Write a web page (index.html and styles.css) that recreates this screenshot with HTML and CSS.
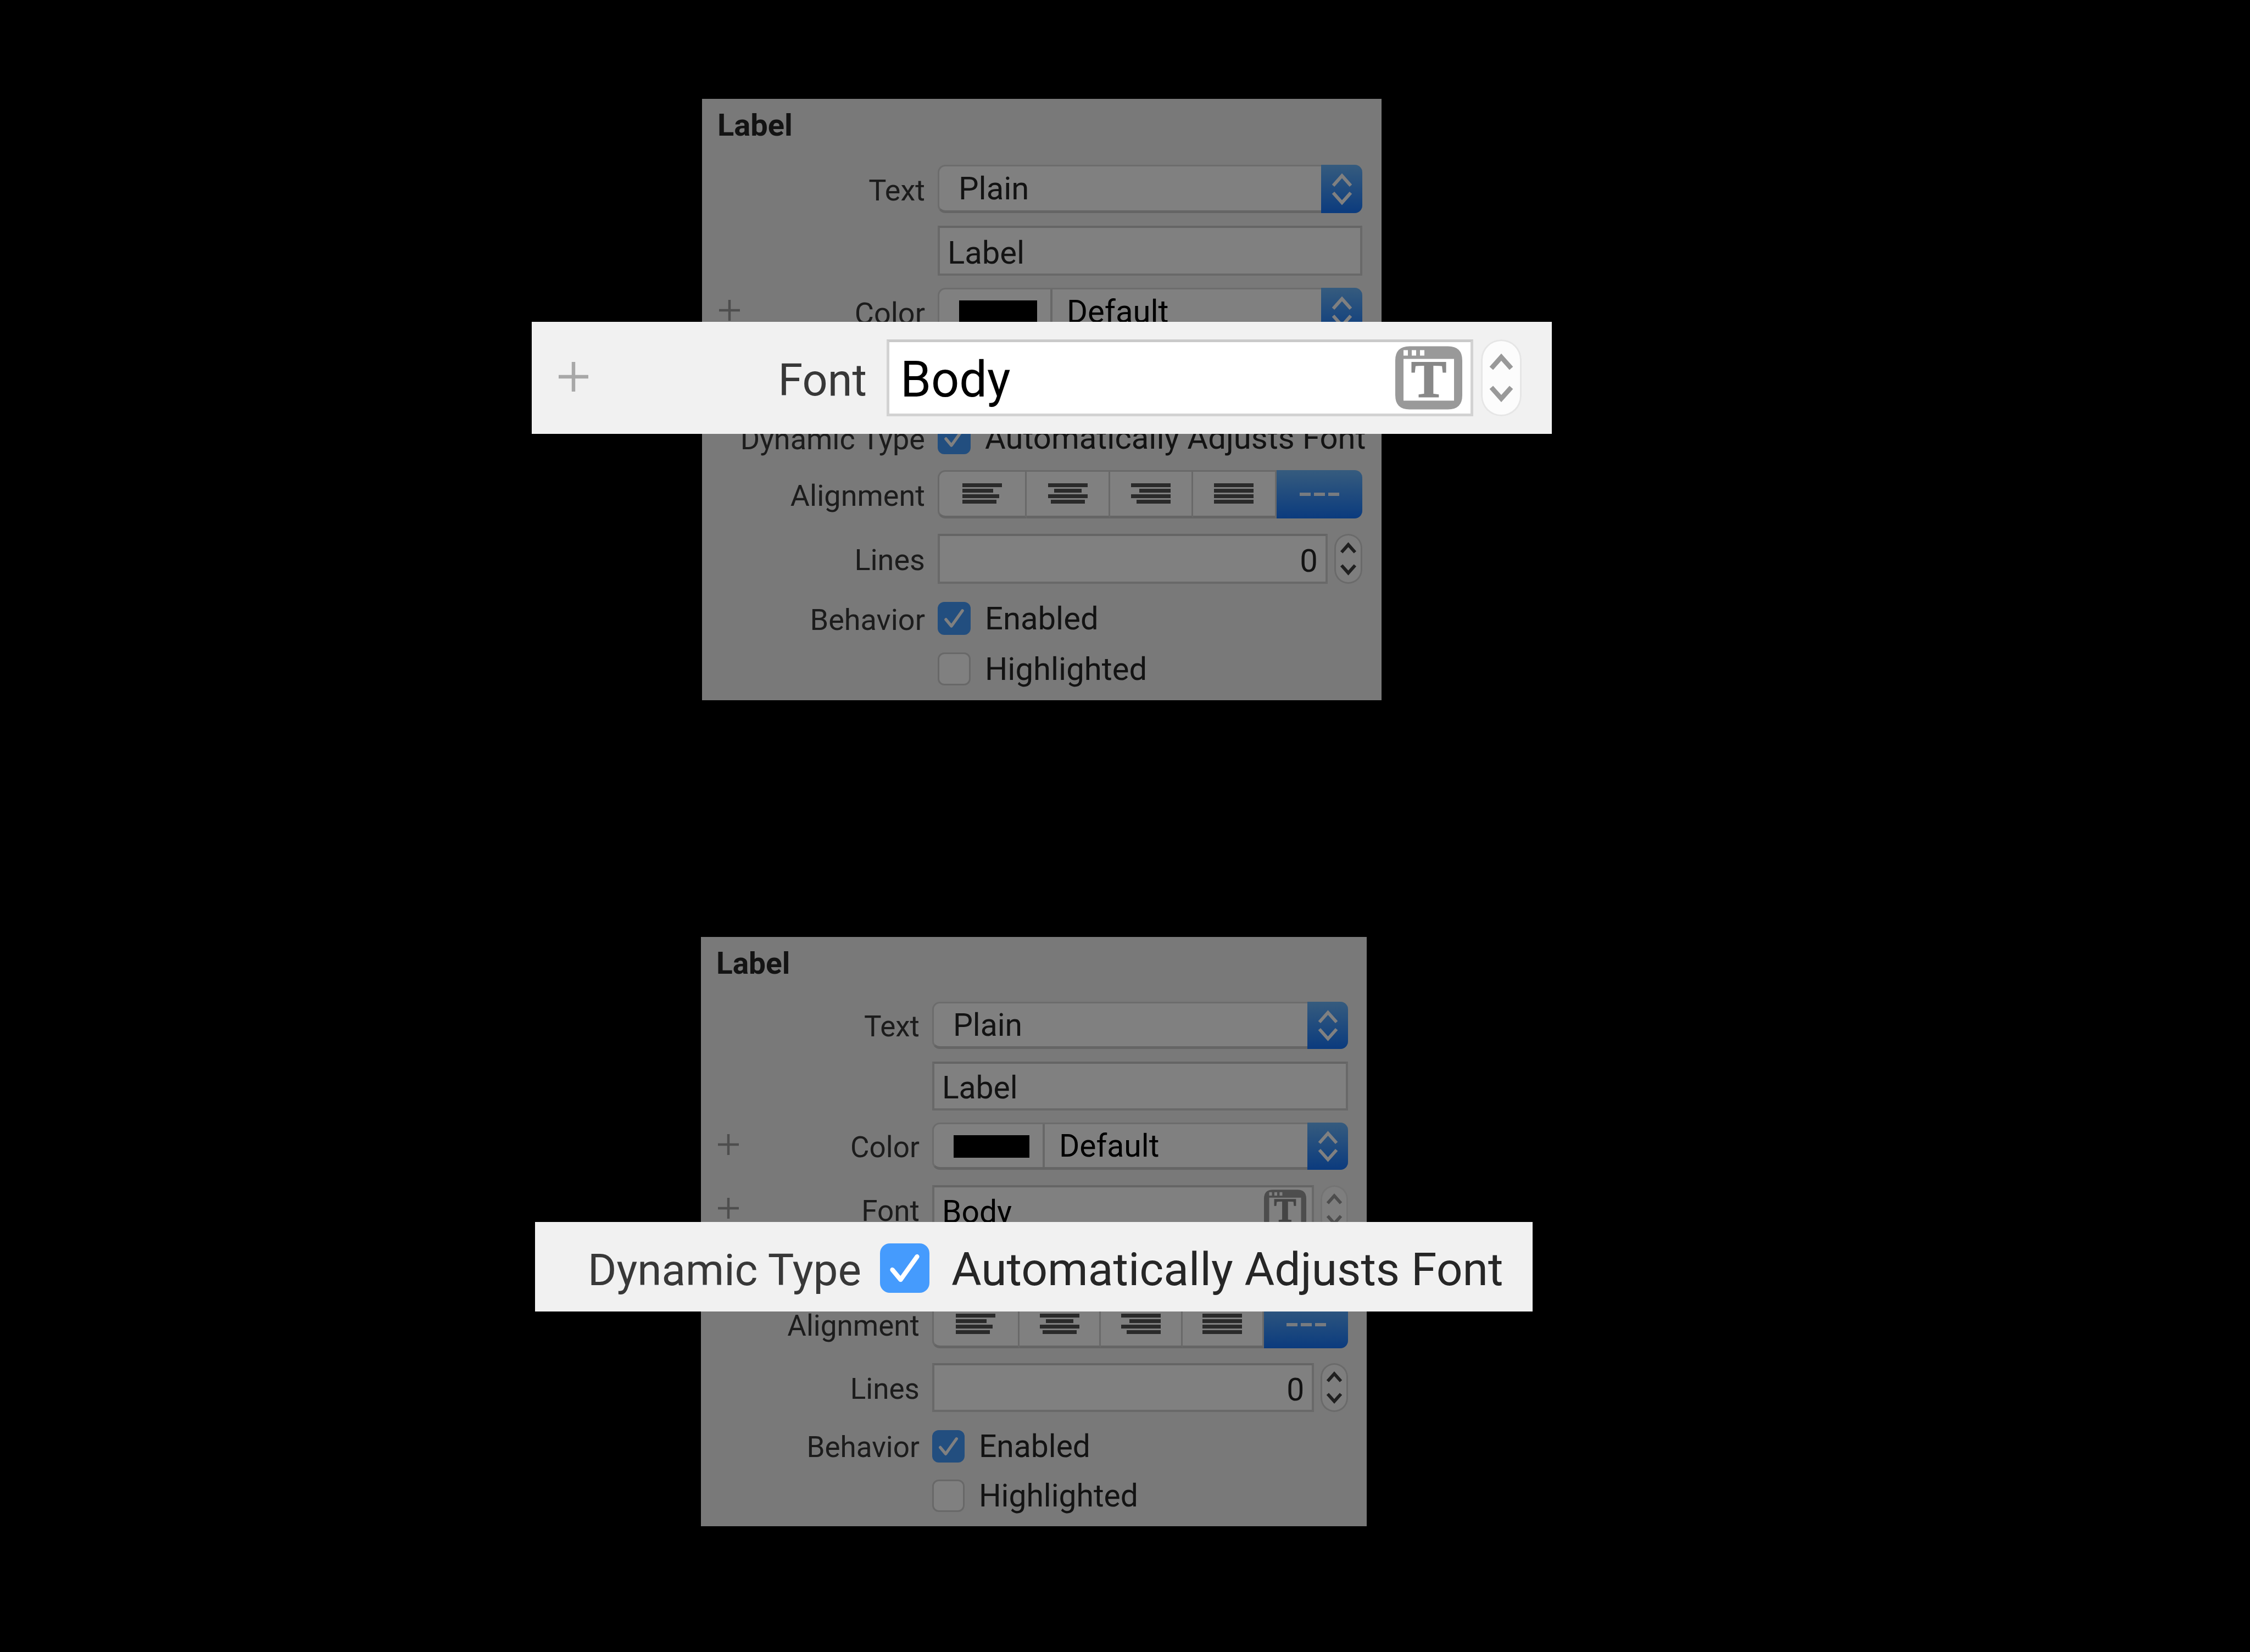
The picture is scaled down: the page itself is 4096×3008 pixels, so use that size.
FILE: index.html
```html
<!DOCTYPE html>
<html lang="en">
<head>
<meta charset="utf-8">
<title>Label inspector</title>
<link rel="stylesheet" href="styles.css">
</head>
<body>
<svg class="sprite" aria-hidden="true">
  <symbol id="plus" viewBox="0 0 38 38"><path d="M19 0V38M0 19H38" stroke="currentColor" stroke-width="4.500" fill="none"/></symbol>
  <symbol id="updown" viewBox="0 0 75 88"><path d="M22 38L38 20L54 38M22 51L38 69L54 51" stroke="#fff" stroke-width="6" fill="none"/></symbol>
  <symbol id="steps" viewBox="0 0 51 92"><path d="M13 34L25.500 20L38 34M13 58L25.500 72L38 58" stroke="currentColor" stroke-width="6" fill="none"/></symbol>
  <symbol id="align-left" viewBox="0 0 72 38"><path d="M0 0H72V7H0ZM0 10H56V17H0ZM0 20H67V27H0ZM0 30H62V37H0Z"/></symbol>
  <symbol id="align-center" viewBox="0 0 72 38"><path d="M0 0H72V7H0ZM11 10H61V17H11ZM0 20H72V27H0ZM5 30H67V37H5Z"/></symbol>
  <symbol id="align-right" viewBox="0 0 72 38"><path d="M0 0H72V7H0ZM15 10H72V17H15ZM0 20H72V27H0ZM10 30H72V37H10Z"/></symbol>
  <symbol id="align-full" viewBox="0 0 72 38"><path d="M0 0H72V7H0ZM0 10H72V17H0ZM0 20H72V27H0ZM0 30H72V37H0Z"/></symbol>
  <symbol id="align-natural" viewBox="0 0 72 38"><path d="M0 16H20V22H0ZM26 16H46V22H26ZM52 16H72V22H52Z"/></symbol>
  <symbol id="font-window" viewBox="0 0 122 115"><path fill="#999" fill-rule="evenodd" d="M26 0H96Q122 0 122 26V89Q122 115 96 115H26Q0 115 0 89V26Q0 0 26 0ZM15 23V99H107V23ZM15 7V17H23V7ZM30 7V17H38V7ZM45 7V17H53V7Z"/><text x="61" y="92" text-anchor="middle" font-family="Liberation Serif, serif" font-weight="700" font-size="96" fill="#888" stroke="#888" stroke-width="2">T</text></symbol>
</svg>
<main class="stage">
  <section class="shot">
    <form class="panel">
      <h2 class="title">Label</h2>
      <div class="row">
        <label class="name" for="a-text">Text</label>
        <div class="popup"><select id="a-text"><option>Plain</option></select><svg class="cap"><use href="#updown"/></svg></div>
      </div>
      <div class="row">
        <input class="field wide" type="text" value="Label" aria-label="Label text">
      </div>
      <div class="row">
        <button class="add" type="button" aria-label="Add color variation"><svg><use href="#plus"/></svg></button>
        <label class="name" for="a-color">Color</label>
        <div class="popup"><span class="well"><span class="swatch"></span></span><select class="strong" id="a-color"><option>Default</option></select><svg class="cap"><use href="#updown"/></svg></div>
      </div>
      <div class="row row-font"></div>
      <div class="row row-type">
        <span class="name">Dynamic Type</span>
        <label class="check"><input type="checkbox" checked>Automatically Adjusts Font</label>
      </div>
      <div class="row row-align">
        <span class="name">Alignment</span>
        <div class="segments" role="group" aria-label="Alignment">
          <button type="button" aria-label="Left"><svg><use href="#align-left"/></svg></button>
          <button type="button" aria-label="Center"><svg><use href="#align-center"/></svg></button>
          <button type="button" aria-label="Right"><svg><use href="#align-right"/></svg></button>
          <button type="button" aria-label="Justified"><svg><use href="#align-full"/></svg></button>
          <button class="on" type="button" aria-label="Natural"><svg><use href="#align-natural"/></svg></button>
        </div>
      </div>
      <div class="row row-lines">
        <label class="name" for="a-lines">Lines</label>
        <input class="field number" id="a-lines" type="text" inputmode="numeric" value="0">
        <button class="stepper" type="button" aria-label="Change lines"><svg><use href="#steps"/></svg></button>
      </div>
      <div class="row row-check">
        <span class="name">Behavior</span>
        <label class="check"><input type="checkbox" checked>Enabled</label>
      </div>
      <div class="row row-check">
        <label class="check wide"><input type="checkbox">Highlighted</label>
      </div>
    </form>
    <form class="callout callout-font">
      <button class="add" type="button" aria-label="Add font variation"><svg><use href="#plus"/></svg></button>
      <label class="name" for="a-font">Font</label>
      <div class="fontbox"><input id="a-font" type="text" value="Body"><svg class="window"><use href="#font-window"/></svg></div>
      <button class="stepper pale" type="button" aria-label="Change font size"><svg><use href="#steps"/></svg></button>
    </form>
  </section>

  <section class="shot shot-small">
    <form class="panel">
      <h2 class="title">Label</h2>
      <div class="row">
        <label class="name" for="b-text">Text</label>
        <div class="popup"><select id="b-text"><option>Plain</option></select><svg class="cap"><use href="#updown"/></svg></div>
      </div>
      <div class="row">
        <input class="field wide" type="text" value="Label" aria-label="Label text">
      </div>
      <div class="row">
        <button class="add" type="button" aria-label="Add color variation"><svg><use href="#plus"/></svg></button>
        <label class="name" for="b-color">Color</label>
        <div class="popup"><span class="well"><span class="swatch"></span></span><select class="strong" id="b-color"><option>Default</option></select><svg class="cap"><use href="#updown"/></svg></div>
      </div>
      <div class="row row-font">
        <button class="add" type="button" aria-label="Add font variation"><svg><use href="#plus"/></svg></button>
        <label class="name" for="b-font">Font</label>
        <div class="fontbox"><input id="b-font" type="text" value="Body"><svg class="window"><use href="#font-window"/></svg></div>
        <button class="stepper pale" type="button" aria-label="Change font size"><svg><use href="#steps"/></svg></button>
      </div>
      <div class="row row-type"></div>
      <div class="row row-align">
        <span class="name">Alignment</span>
        <div class="segments" role="group" aria-label="Alignment">
          <button type="button" aria-label="Left"><svg><use href="#align-left"/></svg></button>
          <button type="button" aria-label="Center"><svg><use href="#align-center"/></svg></button>
          <button type="button" aria-label="Right"><svg><use href="#align-right"/></svg></button>
          <button type="button" aria-label="Justified"><svg><use href="#align-full"/></svg></button>
          <button class="on" type="button" aria-label="Natural"><svg><use href="#align-natural"/></svg></button>
        </div>
      </div>
      <div class="row row-lines">
        <label class="name" for="b-lines">Lines</label>
        <input class="field number" id="b-lines" type="text" inputmode="numeric" value="0">
        <button class="stepper" type="button" aria-label="Change lines"><svg><use href="#steps"/></svg></button>
      </div>
      <div class="row row-check">
        <span class="name">Behavior</span>
        <label class="check"><input type="checkbox" checked>Enabled</label>
      </div>
      <div class="row row-check">
        <label class="check wide"><input type="checkbox">Highlighted</label>
      </div>
    </form>
    <form class="callout callout-type">
      <span class="name">Dynamic Type</span>
      <label class="check"><input type="checkbox" checked><span>Automatically Adjusts Font</span></label>
    </form>
  </section>
</main>
</body>
</html>
```
FILE: styles.css
```css
* { box-sizing: border-box; }

body {
  margin: 0;
  background: #000;
  font-family: Roboto, "Liberation Sans", sans-serif;
}

button, input, select { font: inherit; color: inherit; margin: 0; }
button { padding: 0; border: 0; background: none; }
.sprite { display: none; }

.stage {
  display: flex;
  flex-direction: column;
  gap: 431px;
  padding: 180px 0;
}

/* Sizes shared by both inspector shots */
.shot {
  --row: 112px;
  --row-title: 108px;
  --row-font: 124px;
  --row-type: 98px;
  --row-align: 108px;
  --row-lines: 126px;
  --row-check: 92px;
  --names: 429px;
  --side: 35px;
  --control: 88px;
  --field: 91px;
  --cap: 75px;
  --well: 206px;
  --step: 51px;
  --box: 60px;
  --text: 58px;
  --name: 54px;
  --title: 56px;
  --font-icon: 79px;
  position: relative;
  width: 30.2%;
  margin-left: 31.2%;
}

.shot-small {
  --row: 110px;
  --row-title: 106px;
  --row-font: 121px;
  --row-type: 96px;
  --row-align: 106px;
  --row-lines: 123px;
  --row-check: 90px;
  --names: 421px;
  --side: 34px;
  --control: 86px;
  --field: 89px;
  --cap: 74px;
  --well: 202px;
  --step: 50px;
  --box: 59px;
  --text: 57px;
  --name: 53px;
  --title: 55px;
  --font-icon: 77px;
  width: 29.6%;
  margin-left: 31.15%;
}

.panel {
  padding-bottom: 11px;
  background: #f1f1f1;
  color: #262626;
  font-size: var(--text);
  opacity: 0.5;
}

.title {
  height: var(--row-title);
  margin: 0;
  padding: 16px 0 0 28px;
  font-size: var(--title);
  line-height: 64px;
}

.row {
  position: relative;
  display: flex;
  align-items: center;
  min-height: var(--row);
  padding-right: var(--side);
}
.row-font { min-height: var(--row-font); }
.row-type { min-height: var(--row-type); }
.row-align { min-height: var(--row-align); }
.row-lines { min-height: var(--row-lines); }
.row-check { min-height: var(--row-check); }

.name {
  flex: none;
  width: var(--names);
  padding: 4px 23px 0 0;
  font-size: var(--name);
  text-align: right;
  white-space: nowrap;
  color: #383838;
}
.wide { margin-left: var(--names); }

.add {
  flex: none;
  width: 38px;
  height: 38px;
  margin: 0 -69px 6px 31px;
  color: #9c9c9c;
}
.add svg { display: block; width: 100%; height: 100%; }

/* Pop-up buttons */
.popup {
  flex: 1;
  display: flex;
  min-width: 0;
  height: var(--control);
  border: 3px solid #d8d8d8;
  border-bottom: 5px solid #cacaca;
  border-right: 0;
  border-radius: 14px;
  background: #fff;
}
.popup select {
  flex: 1;
  min-width: 0;
  padding: 0 0 0 35px;
  border: 0;
  background: none;
  appearance: none;
}
.popup .strong { padding-left: 26px; color: #000; }
.cap {
  flex: none;
  width: var(--cap);
  height: var(--control);
  margin-top: -3px;
  border-radius: 0 14px 14px 0;
  background: linear-gradient(#6cb6fb, #1676fb);
}
.well {
  flex: none;
  display: flex;
  width: var(--well);
  padding: 20px 24px 17px 36px;
  border-right: 4px solid #cfcfcf;
}
.swatch { flex: 1; background: #000; }

/* Text fields */
.field, .fontbox {
  flex: 1;
  min-width: 0;
  height: var(--field);
  border: 4px solid #d2d2d2;
  border-top-color: #cacaca;
  border-radius: 0;
  background: #fff;
}
.field { padding: 7px 14px 0; }
.number { text-align: right; }

.fontbox {
  display: flex;
  align-items: center;
  padding-right: 10px;
  color: #000;
}
.fontbox input {
  flex: 1;
  min-width: 0;
  padding: 7px 0 0 14px;
  border: 0;
  background: none;
}
.window { flex: none; width: var(--font-icon); height: 100%; }

.stepper {
  flex: none;
  width: var(--step);
  height: var(--field);
  margin-left: 12px;
  border-radius: 26px;
  background: #fcfcfc;
  box-shadow: inset 0 0 0 3px #d4d4d4;
  color: #404040;
}
.stepper svg { display: block; width: 100%; height: 100%; }
.pale { box-shadow: inset 0 0 0 3px #e6e6e6; color: #999; }

/* Check boxes */
.check {
  display: flex;
  align-items: center;
  gap: 26px;
  white-space: nowrap;
}
.check input {
  flex: none;
  width: var(--box);
  height: var(--box);
  border: 3px solid #d0d0d0;
  border-radius: 12px;
  background: #fff;
  appearance: none;
}
.check input:checked {
  border: 0;
  background: #459bfd url("data:image/svg+xml,%3Csvg xmlns='http://www.w3.org/2000/svg' viewBox='0 0 60 60'%3E%3Cpath d='M15 32L25 44L45 16' fill='none' stroke='%23fff' stroke-width='5.500' stroke-linecap='round' stroke-linejoin='round'/%3E%3C/svg%3E") center / 100% no-repeat;
}

/* Alignment switch */
.segments {
  flex: 1;
  display: flex;
  height: var(--control);
}
.segments button {
  flex: 150;
  display: flex;
  align-items: center;
  justify-content: center;
  border: solid #d2d2d2;
  border-width: 3px 3px 5px 0;
  border-bottom-color: #cacaca;
  background: #fff;
}
.segments button:first-child { flex: 158; border-left-width: 3px; border-radius: 14px 0 0 14px; }
.segments svg { width: 72px; height: 38px; fill: #555; }
.segments .on {
  flex: 158;
  border: 0;
  border-radius: 0 14px 14px 0;
  background: linear-gradient(#6cb6fb, #1676fb);
}
.segments .on svg { fill: #eef6ff; }

/* Enlarged rows laid over the panels */
.callout {
  position: absolute;
  display: flex;
  align-items: center;
  background: #f1f1f1;
  color: #262626;
}
.callout .name { padding-top: 8px; }

.callout-font {
  --names: 646px;
  --name: 81px;
  --field: 140px;
  --step: 74px;
  --font-icon: 122px;
  top: 406px;
  left: -310px;
  right: -310px;
  height: 204px;
  padding-right: 55px;
  font-size: 90px;
}
.callout-font .name { padding-right: 36px; }
.callout-font .add { width: 54px; height: 54px; margin: 0 -103px 4px 49px; color: #a8a8a8; }
.callout-font .fontbox { padding-right: 15px; border-width: 5px; }
.callout-font .fontbox input { padding-left: 20px; }
.callout-font .stepper { margin-left: 14px; border-radius: 37px; }

.callout-type {
  --names: 628px;
  --name: 80px;
  --box: 90px;
  top: 519px;
  left: -302px;
  right: -302px;
  height: 163px;
  padding-top: 4px;
  font-size: 84px;
}
.callout-type .name { padding-right: 34px; }
.callout-type .check { gap: 40px; }
.callout-type .check span { padding-top: 6px; }
.callout-type .check input { border-radius: 18px; }
```
